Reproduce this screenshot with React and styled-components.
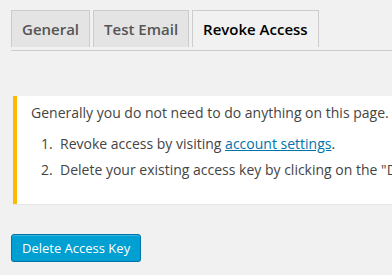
import React from 'react';
import styled, { createGlobalStyle } from 'styled-components';

const GlobalStyle = createGlobalStyle`
  html, body {
    margin: 0;
    padding: 0;
    background: #f1f1f1;
    overflow: hidden;
  }
  body {
    font-family: 'Open Sans', 'Noto Sans', sans-serif;
    font-size: 14px;
    color: #444;
  }
`;

const tabs = ['General', 'Test Email', 'Revoke Access'];

const App = () => {
  const active = 'Revoke Access';
  return (
    <>
      <GlobalStyle />
      <Wrap>
        <TabBar>
          {tabs.map((t) => (
            <Tab key={t} $active={t === active}>
              {t}
            </Tab>
          ))}
        </TabBar>
        <Notice>
          <Text>Generally you do not need to do anything on this page.</Text>
          <Steps>
            <Step>
              Revoke access by visiting <A href="#">account settings</A>.
            </Step>
            <Step>Delete your existing access key by clicking on the "Delete Access Key" button below.</Step>
          </Steps>
        </Notice>
        <Button type="button">Delete Access Key</Button>
      </Wrap>
    </>
  );
};

export default App;

const Wrap = styled.div`
  padding: 10px 0 0 11px;
  width: 900px;
`;

const TabBar = styled.div`
  display: flex;
  gap: 3px;
  padding-bottom: 3px;
  border-bottom: 1px solid #ccc;
  width: 381px;
`;

const Tab = styled.a`
  display: block;
  height: 37px;
  box-sizing: border-box;
  padding: 0 10px;
  border: 1px solid #ccc;
  border-bottom: none;
  background: ${({ $active }) => ($active ? '#f1f1f1' : '#e4e4e4')};
  color: ${({ $active }) => ($active ? '#000' : '#555')};
  font-size: 15px;
  font-weight: 600;
  line-height: 36px;
  white-space: nowrap;
  text-decoration: none;
`;

const Notice = styled.div`
  margin: 45px 0 0 2px;
  padding: 1px 12px;
  background: #fff;
  border-left: 4px solid #ffb900;
  box-shadow: 0 1px 1px rgba(0, 0, 0, 0.04);
`;

const Text = styled.p`
  margin: 5px 0 10px;
  padding: 0 2px;
  line-height: 21px;
  white-space: nowrap;
`;

const Steps = styled.ol`
  margin: 0 0 23px 12px;
  padding: 0;
  list-style: none;
  counter-reset: step;
  line-height: 21px;
`;

const Step = styled.li`
  margin-bottom: 5px;
  white-space: nowrap;
  counter-increment: step;
  &::before {
    content: counter(step) '.';
    display: inline-block;
    width: 19px;
  }
`;

const A = styled.a`
  color: #0073aa;
  text-decoration: underline;
`;

const Button = styled.button`
  display: block;
  margin-top: 30px;
  height: 28px;
  padding: 0 10px 1px;
  border: 1px solid #0073aa;
  border-radius: 3px;
  background: #00a0d2;
  box-shadow: inset 0 1px 0 rgba(120, 200, 230, 0.5), 0 1px 0 rgba(0, 0, 0, 0.15);
  color: #fff;
  font-family: 'Open Sans', 'Noto Sans', sans-serif;
  font-size: 13px;
  line-height: 26px;
  cursor: pointer;
`;
